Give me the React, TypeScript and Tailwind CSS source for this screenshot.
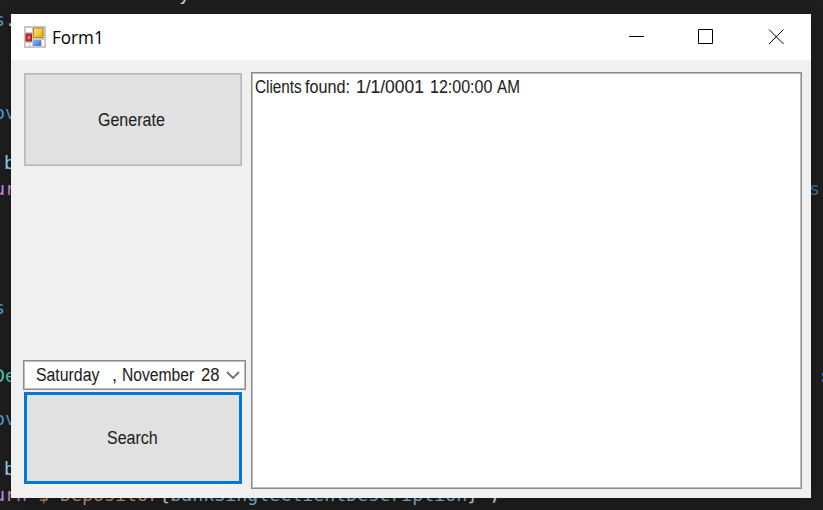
import React from "react";

const codeFont = "font-['DejaVu_Sans_Mono',monospace] text-[18.3px] leading-6";
const uiFont =
  "font-['Liberation_Sans',Arial,sans-serif] text-[18px] leading-5 text-[#1f1f1f] [-webkit-text-stroke:0.1px_#1f1f1f]";

function Code({ className, children }: { className: string; children: React.ReactNode }) {
  return <div className={`absolute whitespace-pre ${codeFont} ${className}`}>{children}</div>;
}

function Editor() {
  return (
    <div aria-hidden="true">
      <Code className="left-[179px] top-[-18px] text-[#d4d4d4]">y</Code>
      <Code className="left-[-6px] top-[8px] text-[#569cd6]">s<span className="text-[#d4d4d4]">.</span></Code>
      <Code className="left-[-6px] top-[101px] text-[#569cd6]">ov</Code>
      <Code className="left-[4px] top-[151px] text-[#9cdcfe]">b</Code>
      <Code className="left-[-6px] top-[177px] text-[#d08ee0]">ur</Code>
      <Code className="left-[-6px] top-[296px] text-[#569cd6]">s</Code>
      <Code className="left-[-6px] top-[364px] text-[#4ec9b0]">De</Code>
      <Code className="left-[-6px] top-[407px] text-[#569cd6]">ov</Code>
      <Code className="left-[4px] top-[457px] text-[#9cdcfe]">b</Code>
      <Code className="left-[-6px] top-[483px] text-[#ce9178]">
        <span className="text-[#d08ee0]">urn </span>$"Depositor<span className="text-[#d4d4d4]">{"{"}</span>
        <span className="text-[#7fb8d8]">bankSingleClientDescription</span>
        <span className="text-[#d4d4d4]">{"}"}</span>"<span className="text-[#d4d4d4]">;</span>
      </Code>
      <Code className="left-[809px] top-[177px] text-[#3a6fa8]">s.</Code>
      <Code className="left-[818px] top-[364px] text-[#569cd6]">:</Code>
    </div>
  );
}

function FormIcon() {
  return (
    <svg width="22" height="22" viewBox="0 0 22 22" className="block">
      <defs>
        <linearGradient id="gold" x1="0" y1="0" x2="1" y2="1">
          <stop offset="0" stopColor="#ffe680" />
          <stop offset="1" stopColor="#e9a800" />
        </linearGradient>
        <linearGradient id="blue" x1="0" y1="0" x2="1" y2="1">
          <stop offset="0" stopColor="#8bb4f5" />
          <stop offset="1" stopColor="#3a6fd0" />
        </linearGradient>
      </defs>
      <rect x="0.5" y="0.5" width="21" height="21" fill="#cbcbcb" stroke="#c4c4c4" />
      <path d="M2 2h6v4H2zM2 17h3v3H2zM6 17h2v3H6zM18 14h2v6h-2z" fill="#fff" />
      <rect x="2" y="8" width="5.5" height="7" fill="#c8322c" stroke="#a52020" />
      <rect x="4" y="10" width="1.5" height="3" fill="#f0a09a" />
      <rect x="9.5" y="2" width="9.5" height="9.5" fill="url(#gold)" stroke="#b08a20" />
      <rect x="9" y="14" width="8" height="6" fill="url(#blue)" />
    </svg>
  );
}

function TitleBar() {
  return (
    <header className="flex h-[46px] items-center bg-white pl-[13px]">
      <FormIcon />
      <h1 className="ml-[6px] font-['Open_Sans',sans-serif] text-[18px] leading-6 text-black">
        <span className="inline-block origin-left scale-x-[0.95]">Form1</span>
      </h1>
      <svg className="ml-auto mr-[25px]" width="157" height="16" viewBox="0 0 157 16" fill="none" stroke="#000">
        <path d="M0 7.5h15M69.5 .5h14v14h-14z" />
        <path d="M140 .5l14.5 14.5M154.5 .5l-14.5 14.5" />
      </svg>
    </header>
  );
}

export default function App() {
  return (
    <div className="relative h-[510px] w-[823px] overflow-hidden bg-[#1e1e1e]">
      <Editor />
      <main className="absolute left-[11px] top-[14px] h-[484px] w-[800px] bg-[#f0f0f0] shadow-[0_3px_14px_rgba(0,0,0,0.3)]">
        <TitleBar />
        <div className="flex pl-3 pt-3">
          <div className="flex w-[228px] flex-col pt-px">
            <button className={`ml-px flex h-[93px] w-[218px] items-center justify-center border border-[#b8b8b8] bg-[#e1e1e1] shadow-[inset_0_0_0_1px_#c6c6c6] ${uiFont}`}>
              <span className="mr-[2px] inline-block w-[68px] origin-left scale-x-[0.89] whitespace-nowrap text-left">Generate</span>
            </button>
            <div className="mt-[194px] flex h-[30px] w-[223px] items-center border border-[#8c8c8c] bg-white shadow-[inset_0_0_0_1px_#bdbdbd]">
              <div className={`ml-3 flex w-[190px] whitespace-pre ${uiFont}`}>
                <span className="w-[76px] origin-left scale-x-[0.88]">Saturday</span>
                <span className="w-[10px]">,</span>
                <span className="w-[79px] origin-left scale-x-[0.87]">November</span>
                <span className="origin-left scale-x-[0.92]">28</span>
              </div>
              <svg width="14" height="8" viewBox="0 0 14 8" fill="none" stroke="#707070" strokeWidth="1.8">
                <path d="M1 1l6 6 6-6" />
              </svg>
            </div>
            <button className={`ml-px mt-[2px] flex h-[92px] w-[218px] items-center justify-center border-[3px] border-[#0078d7] bg-[#e1e1e1] ${uiFont}`}>
              <span className="mr-[2px] inline-block w-[51px] origin-left scale-x-[0.89] whitespace-nowrap text-left">Search</span>
            </button>
          </div>
          <div className="h-[417px] w-[551px] border border-[#8c8c8c] bg-white pl-[3px] pt-1 shadow-[inset_0_0_0_1px_#bdbdbd]">
            <div className={`flex whitespace-pre ${uiFont}`}>
              <span className="w-[50px] origin-left scale-x-[0.85]">Clients</span>
              <span className="w-[51px] origin-left scale-x-[0.9]">found:</span>
              <span className="w-[74px] origin-left scale-x-[0.97]">1/1/0001</span>
              <span className="w-[67px] origin-left scale-x-[0.89]">12:00:00</span>
              <span className="origin-left scale-x-[0.85]">AM</span>
            </div>
          </div>
        </div>
      </main>
    </div>
  );
}
